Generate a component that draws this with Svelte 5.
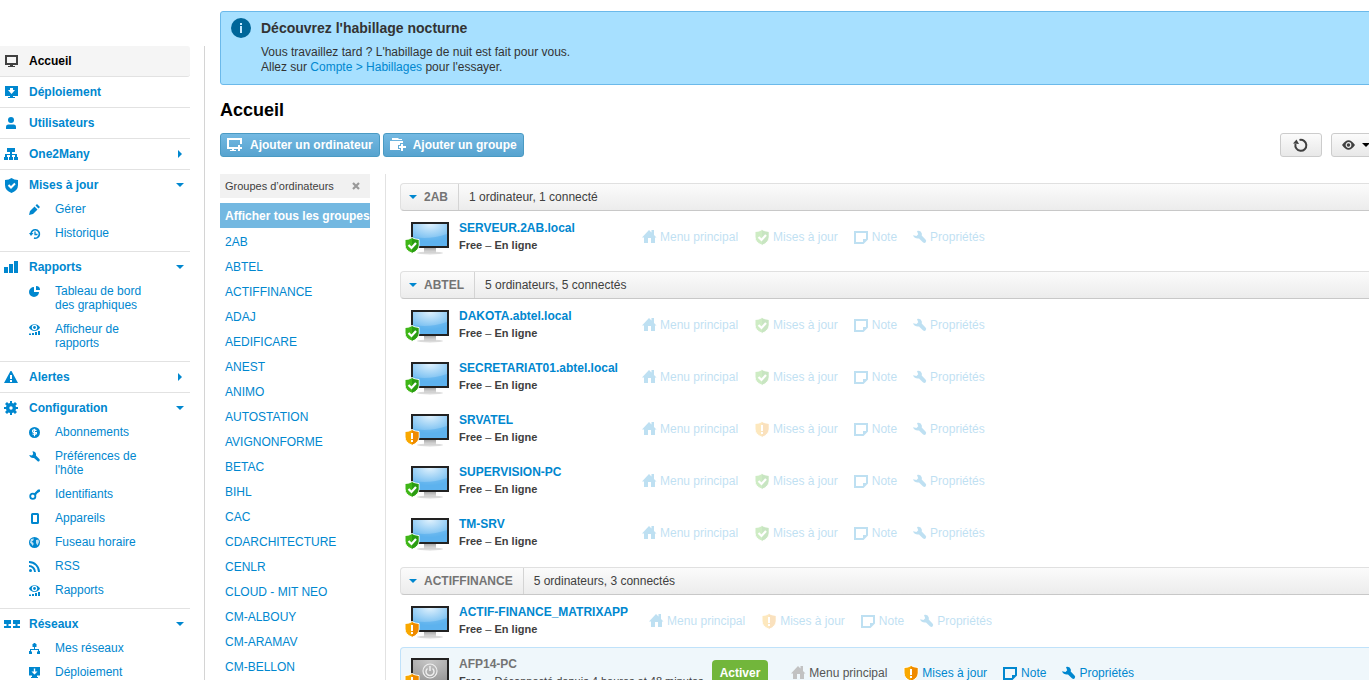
<script>
  const shapes = {
    monitor: '<path d="M1 1h13v10H9v1h2v1H4v-1h2v-1H1zM3 3v6h9V3z"/>',
    deploy: '<path d="M1 1h13v10H9v1h2v1H4v-1h2v-1H1zM6 3v2H4l3.500 4L11 5H9V3z"/>',
    user: '<circle cx="7" cy="4" r="3"/><path d="M2 13v-2.500Q2 9 4 8.500h6q2 .5 2 2V13z"/>',
    org: '<path d="M3 1h8v4H8v2h5v3h1v3h-4v-3h1V8H8v2h1v3H5v-3h1V8H3v2h1v3H0v-3h1V7h5V5H3z"/>',
    shieldBlue: '<path d="M7.500 0Q10 2 14 2v5q0 5.500-6.500 8Q1 12.500 1 7V2q4 0 6.500-2z"/><path d="M4.500 7l2.500 2.500L11 5.500" fill="none" stroke="#fff" stroke-width="2"/>',
    bars: '<path d="M0 7h4v6H0zM5 4h4v9H5zM10 1h4v12h-4z"/>',
    warning: '<path d="M6.500 1h1L14 13H0zM6 5v4h2V5zM6 10v2h2v-2z"/>',
    gear: '<path d="M6 0h2v2l1.500.5L11 1l2 2-1.500 1.500L12 6h2v2h-2l-.5 1.500L13 11l-2 2-1.500-1.500L8 12v2H6v-2l-1.500-.5L3 13l-2-2 1.500-1.500L2 8H0V6h2l.5-1.500L1 3l2-2 1.500 1.500L6 2zM7 5.300a1.700 1.700 0 100 3.400 1.700 1.700 0 000-3.400z"/>',
    networks: '<path d="M0 4h7v4H4.500v2H7v2H0v-2h2.500V8H0zM9 4h7v4h-2.500v2H16v2H9v-2h2.500V8H9z"/>',
    pencil: '<path d="M0 11l1-4 4.500-4.500 3 3L4 10zM6.500 1.500L8 0l3 3-1.500 1.500z"/>',
    history: '<path d="M2 6a4.200 4.200 0 113 4" fill="none" stroke="currentColor" stroke-width="1.600"/><path d="M0 5h4.500L2 8z"/><path d="M6 3.500v3h2.500" fill="none" stroke="currentColor" stroke-width="1.300"/>',
    pie: '<path d="M5 1v5h5a5 5 0 11-5-5z"/><path d="M7 0q4 0 4 4H7z"/>',
    viewer: '<path d="M0 3.500C2-1 9-1 11 3.500 9 8 2 8 0 3.500z"/><circle cx="5.500" cy="3.500" r="2.700" fill="#fff"/><circle cx="5.500" cy="3.500" r="1.400"/><path d="M0 9.500h2V11H0zM3 9h2v2H3zM6 8h2v3H6zM9 7h2v4H9z"/>',
    dollar: '<path d="M5.500 0a5.500 5.500 0 100 11 5.500 5.500 0 000-11z"/><path d="M7.500 3.500q-4-1.500-4 .5t4 1.500q.5 2.500-4 1.500M5.500 1.800v7.400" fill="none" stroke="#fff" stroke-width="1.100"/>',
    wrench: '<path d="M3.500.3Q6.500.3 7 3q.1 1-.1 1.500L10.300 8q1 1 .1 2t-2 0L5 6.900Q1.500 7.500.2 4L3 4.600 4.200 3z"/>',
    key: '<circle cx="3.800" cy="7.300" r="2.600" fill="none" stroke="currentColor" stroke-width="1.800"/><path d="M4.500 5L9 .5h2v2.200l-1.500.3v1l-1.300.3L6.500 7z"/>',
    device: '<path d="M3.500 0h5Q10 0 10 1.500v8Q10 11 8.500 11h-5Q2 11 2 9.500v-8Q2 0 3.500 0zM4 2v7h4V2z"/>',
    globe: '<path d="M5.500 0a5.500 5.500 0 100 11 5.500 5.500 0 000-11z"/><path d="M2 2l3-.5L4 4 2.500 4.500 4.500 6v1.500L3.500 9 2.500 7 1 5.500zM7 3l2.500-.5L10 5 8.500 8.500 7 6z" fill="#fff" opacity=".75"/>',
    rss: '<circle cx="1.500" cy="9.500" r="1.500"/><path d="M0 5a6 6 0 016 6M0 1a10 10 0 0110 10" fill="none" stroke="currentColor" stroke-width="1.900"/>',
    smallOrg: '<path d="M4.500 0h2v1h1v3h-4V1h1zM5 4h1v2h4v2h1v3H8V8.500h1V7H2v1.500h1V11H0V8h1V6h4z"/>',
    smallDeploy: '<path d="M0 0h11v8.500H8V10h1v1H2v-1h1V8.500H0zM4.800 1.500v3H2.500l3 3 3-3H6.200v-3z"/>',
    home: '<path d="M7 0l2.500 2.500V0H12v5l2.500 2.500H13V13H9V8H6v5H2V7.500H0z"/>',
    note: '<path d="M0 1h14v8.500L9.500 14H0zM2 3v9h7V9h3V3z"/><path d="M9.500 12.500V9.500H13" fill="none" stroke="currentColor"/>',
    wrenchBig: '<path d="M4 1Q8 0 8.800 3.500q.2 1-.1 2L12.500 9.500q1.300 1.300.2 2.700t-2.800 0L6 8.500Q1.500 9 0 5.300L3.500 6 5.200 4.200z"/>',
    refresh: '<path d="M6.500 2a5.500 5.500 0 11-4 4" fill="none" stroke="currentColor" stroke-width="2"/><path d="M0 5.500L3.500 1.500 6 6z"/>',
    eye: '<path d="M0 7q6.500-9.500 13 0-6.500 9.500-13 0z"/><circle cx="6.500" cy="7" r="2.300" fill="none" stroke="#eee" stroke-width="1.200"/>',
    addPc: '<path d="M0 1h15v6h-2V3H2v7h7v2H7v1h2v1H3v-1h2v-1H0zM11 8h2v2h2v2h-2v2h-2v-2H9v-2h2z"/>',
    addGroup: '<path d="M2 1h6l1 1h3v1H2zM0 4h13v2h-3v2H8v4h2v1H0zM11 7h2v2h3v2h-3v3h-2v-3H9V9h2z"/>',
    info: '<circle cx="10" cy="10" r="10" fill="#069"/><path d="M9 5h2v2H9zM9 8h2v7H9z" fill="#c5e9ff"/>'
  };

  const nav = [
    { label: 'Accueil', icon: 'monitor', active: true },
    { label: 'Déploiement', icon: 'deploy' },
    { label: 'Utilisateurs', icon: 'user' },
    { label: 'One2Many', icon: 'org', closed: true },
    { label: 'Mises à jour', icon: 'shieldBlue', items: [['pencil', 'Gérer'], ['history', 'Historique']] },
    { label: 'Rapports', icon: 'bars', items: [['pie', 'Tableau de bord des graphiques'], ['viewer', 'Afficheur de rapports']] },
    { label: 'Alertes', icon: 'warning', closed: true },
    {
      label: 'Configuration', icon: 'gear', items: [
        ['dollar', 'Abonnements'], ['wrench', "Préférences de l'hôte"], ['key', 'Identifiants'], ['device', 'Appareils'],
        ['globe', 'Fuseau horaire'], ['rss', 'RSS'], ['viewer', 'Rapports']
      ]
    },
    { label: 'Réseaux', icon: 'networks', items: [['smallOrg', 'Mes réseaux'], ['smallDeploy', 'Déploiement']] }
  ];

  const groups = ['2AB', 'ABTEL', 'ACTIFFINANCE', 'ADAJ', 'AEDIFICARE', 'ANEST', 'ANIMO', 'AUTOSTATION', 'AVIGNONFORME',
    'BETAC', 'BIHL', 'CAC', 'CDARCHITECTURE', 'CENLR', 'CLOUD - MIT NEO', 'CM-ALBOUY', 'CM-ARAMAV', 'CM-BELLON'];

  const sections = [
    { name: '2AB', count: '1 ordinateur, 1 connecté', hosts: [{ name: 'SERVEUR.2AB.local' }] },
    {
      name: 'ABTEL', count: '5 ordinateurs, 5 connectés', hosts: [
        { name: 'DAKOTA.abtel.local' }, { name: 'SECRETARIAT01.abtel.local' }, { name: 'SRVATEL', alert: true },
        { name: 'SUPERVISION-PC' }, { name: 'TM-SRV' }
      ]
    },
    {
      name: 'ACTIFFINANCE', count: '5 ordinateurs, 3 connectés', hosts: [
        { name: 'ACTIF-FINANCE_MATRIXAPP', alert: true },
        { name: 'AFP14-PC', alert: true, offline: true, since: 'Déconnecté depuis 4 heures et 48 minutes' }
      ]
    }
  ];
</script>

{#snippet icon(name, w, h = w)}
  <svg class="icon" width={w} height={h} viewBox="0 0 {w} {h}" fill="currentColor" fill-rule="evenodd" aria-hidden="true">{@html shapes[name]}</svg>
{/snippet}

{#snippet shield(alert)}
  <svg class="icon" width="16" height="17" viewBox="0 0 16 17" aria-hidden="true">
    <path d="M8 .5Q10.500 2.500 15 2.500V8q0 5.500-7 8.200Q1 13.500 1 8V2.500Q5.500 2.500 8 .5z" fill={alert ? '#f9a800' : '#3fb618'} stroke="#fff" />
    <path d="M8 1.200Q10.500 3 14.500 3v5q0 5-6.500 7.700z" fill={alert ? '#ef8a00' : '#2a9c12'} />
    {#if alert}
      <path d="M7 4h2v6H7zM7 11h2v2H7z" fill="#fff" />
    {:else}
      <path d="M4.500 8l3 3L12 6" fill="none" stroke="#fff" stroke-width="2.200" />
    {/if}
  </svg>
{/snippet}

{#snippet caret(dir)}
  <svg class="icon" width="8" height="8" viewBox="0 0 8 8" fill="currentColor" aria-hidden="true">
    <path d={dir === 'right' ? 'M2 0l4 4-4 4z' : 'M0 2h8L4 6z'} />
  </svg>
{/snippet}

<svg class="defs" width="0" height="0" aria-hidden="true">
  <defs>
    <radialGradient id="screen-on" cx=".5" cy="0" r=".8"><stop offset="0" stop-color="#dff1fd" /><stop offset="1" stop-color="#6dbaf0" /></radialGradient>
    <radialGradient id="screen-off" cx=".5" cy="0" r="1"><stop offset="0" stop-color="#c8c8c8" /><stop offset="1" stop-color="#999" /></radialGradient>
    <linearGradient id="stand" x2="0" y2="1"><stop offset="0" stop-color="#aaa" /><stop offset="1" stop-color="#e6e6e6" /></linearGradient>
  </defs>
</svg>

<div class="page">
  <nav class="sidebar">
    <ul class="menu">
      {#each nav as entry}
        <li class:active={entry.active}>
          <a class="head" class:open={entry.items} href="#{entry.icon}">
            <span class="slot">{@render icon(entry.icon, entry.icon === 'networks' ? 16 : 15)}</span>
            <span class="label">{entry.label}</span>
            {#if entry.items}{@render caret('down')}{:else if entry.closed}{@render caret('right')}{/if}
          </a>
          {#if entry.items}
            <ul class="sub">
              {#each entry.items as [ic, label]}
                <li><a href="#{ic}">{@render icon(ic, 12)}<span>{label}</span></a></li>
              {/each}
            </ul>
          {/if}
        </li>
      {/each}
    </ul>
  </nav>

  <main>
    <section class="notice">
      {@render icon('info', 20)}
      <div>
        <h2>Découvrez l'habillage nocturne</h2>
        <p>Vous travaillez tard ? L'habillage de nuit est fait pour vous.<br />Allez sur <a href="#themes">Compte &gt; Habillages</a> pour l'essayer.</p>
      </div>
    </section>

    <h1>Accueil</h1>

    <div class="toolbar">
      <button class="primary">{@render icon('addPc', 16)}Ajouter un ordinateur</button>
      <button class="primary">{@render icon('addGroup', 16)}Ajouter un groupe</button>
      <span class="spacer"></span>
      <button class="plain" aria-label="Actualiser">{@render icon('refresh', 15)}</button>
      <button class="plain view" aria-label="Affichage">{@render icon('eye', 14)}{@render caret('down')}</button>
    </div>

    <div class="content">
      <aside>
        <div class="groups-head">Groupes d’ordinateurs
          <button class="close" aria-label="Fermer"><svg width="8" height="8" viewBox="0 0 8 8"><path d="M1 1l6 6M7 1L1 7" stroke="#999" stroke-width="2.200" /></svg></button>
        </div>
        <ul class="groups">
          <li><a class="current" href="#all">Afficher tous les groupes</a></li>
          {#each groups as g}
            <li><a href="#{g}">{g}</a></li>
          {/each}
        </ul>
      </aside>

      <div class="hosts">
        {#each sections as s}
          <section class="section">
            <header>
              <button class="toggle">{@render caret('down')}{s.name}</button>
              <span class="count">{s.count}</span>
            </header>
            {#each s.hosts as h}
              <div class="host" class:offline={h.offline}>
                <div class="computer">
                  <svg width="46" height="34" viewBox="0 0 46 34" aria-hidden="true">
                    <path d="M19 26h12v5H19z" fill="url(#stand)" />
                    <ellipse cx="25" cy="31" rx="13" ry="1.500" fill="#ccc" opacity=".7" />
                    <path d="M6 0h38v26H6z" fill="#222" />
                    <path d="M8 2h34v22H8z" fill={h.offline ? 'url(#screen-off)' : 'url(#screen-on)'} />
                    {#if h.offline}
                      <circle cx="25" cy="13" r="7" fill="none" stroke="#eee" stroke-width="1.200" />
                      <path d="M22.500 10.500a4 4 0 105 0M25 8v5" fill="none" stroke="#eee" stroke-width="1.500" />
                    {:else}
                      <path d="M8 15q17 3 34-3v12H8z" fill="#4aa9ec" opacity=".45" />
                    {/if}
                  </svg>
                  <span class="status-badge">{@render shield(h.alert)}</span>
                </div>
                <div class="who">
                  <a class="name" href="#{h.name}">{h.name}</a>
                  <div class="state"><b>Free</b> – {#if h.since}{h.since}{:else}<b>En ligne</b>{/if}</div>
                </div>
                {#if h.offline}<button class="activate">Activer</button>{/if}
                <div class="actions">
                  <a class="main-menu" href="#menu">{@render icon('home', 15)}Menu principal</a>
                  <a href="#updates">{@render shield(h.alert)}Mises à jour</a>
                  <a href="#note">{@render icon('note', 15)}Note</a>
                  <a href="#properties">{@render icon('wrenchBig', 14)}Propriétés</a>
                </div>
              </div>
            {/each}
          </section>
        {/each}
      </div>
    </div>
  </main>
</div>

<style>
  :global(body) { background: #fff; }
  .page {
    display: flex;
    height: 100vh;
    overflow-x: hidden;
    overflow-y: auto;
    scrollbar-width: none;
    font: 12px/14px "Liberation Sans", Arial, sans-serif;
    color: #404040;
  }
  .page * { box-sizing: border-box; }
  .defs { position: absolute; }
  .icon { flex: none; display: block; }
  ul { list-style: none; margin: 0; padding: 0; }
  a { color: #0087cf; text-decoration: none; }
  button { font: inherit; margin: 0; cursor: pointer; }

  .sidebar {
    flex: none;
    width: 205px;
    height: max-content;
    margin-top: 46px;
    padding-right: 14px;
    border-right: 1px solid #d4d4d4;
  }
  .menu > li { border-bottom: 1px solid #e2e2e2; }
  .menu > .active { background: #f5f5f5; border-radius: 0 3px 3px 0; }
  .head { display: flex; align-items: center; padding: 8px 6px 8px 4px; font-weight: bold; }
  .head.open { padding-bottom: 5px; }
  .active .head { color: #000; }
  .active .slot { color: #404040; }
  .slot { display: flex; align-items: center; width: 25px; height: 14px; }
  .label { flex: 1; }
  .sub { padding-bottom: 6px; }
  .sub a { display: flex; gap: 14px; padding: 5px 30px 5px 29px; }
  .sub .icon, .sub :global(svg) { margin-top: 2px; }

  main { flex: 1; min-width: 0; margin-right: -16px; padding: 11px 0 0 15px; }
  .notice {
    display: flex;
    gap: 10px;
    padding: 6px 10px 9px;
    border: 1px solid #6bb9ea;
    border-radius: 3px;
    background: #a7e0ff;
    color: #333;
  }
  h2 { margin: 0; font-size: 14px; line-height: 20px; }
  .notice p { margin: 7px 0 0; line-height: 15px; }
  h1 { margin: 15px 0 12px; font-size: 18px; line-height: 21px; color: #000; }

  .toolbar { display: flex; gap: 3px; margin-bottom: 17px; }
  .spacer { flex: 1; }
  .primary {
    display: flex;
    align-items: center;
    gap: 7px;
    height: 24px;
    padding: 0 6px;
    border: 1px solid #4a9ac3;
    border-radius: 3px;
    background: linear-gradient(#74b9e2, #57a3cf);
    color: #fff;
    font-weight: bold;
  }
  .plain {
    display: flex;
    align-items: center;
    justify-content: center;
    gap: 6px;
    width: 42px;
    height: 24px;
    padding: 0 2px 0 0;
    border: 1px solid #ccc;
    border-radius: 3px;
    background: linear-gradient(#fbfbfb, #e8e8e8);
    color: #404040;
  }
  .view { justify-content: flex-start; width: 54px; margin-left: 6px; padding-left: 10px; }
  .view :global(svg:last-child) { color: #000; }

  .content { display: flex; }
  aside { flex: none; width: 166px; padding-right: 15px; border-right: 1px solid #e2e2e2; }
  .groups-head {
    display: flex;
    align-items: center;
    justify-content: space-between;
    height: 24px;
    margin-bottom: 5px;
    padding: 0 10px 0 5px;
    background: #f1f1f1;
    font-size: 11px;
  }
  .close { display: flex; padding: 0; border: 0; background: none; }
  .groups a { display: block; padding: 6px 0 5px 5px; white-space: nowrap; }
  .groups .current { margin-bottom: 1px; background: #73b8e1; color: #fff; font-weight: bold; }

  .hosts { flex: 1; min-width: 0; padding: 9px 0 0 14px; }
  .section { margin-bottom: 8px; }
  header {
    display: flex;
    height: 28px;
    border: 1px solid #e0e0e0;
    border-bottom-color: #c8c8c8;
    border-radius: 4px;
    background: linear-gradient(#fbfbfb, #ececec);
    line-height: 26px;
  }
  .toggle {
    display: flex;
    align-items: center;
    gap: 7px;
    padding: 0 10px 0 8px;
    border: 0;
    border-right: 1px solid #d4d4d4;
    background: none;
    color: #747474;
    font-weight: bold;
  }
  .toggle :global(svg) { color: #0087cf; }
  .count { padding-left: 10px; }

  .host { display: flex; height: 52px; padding: 0 4px; border: 1px solid transparent; border-width: 1px 1px 0; white-space: nowrap; }
  .host.offline { border-color: #c0e2fa; border-radius: 4px 4px 0 0; background: #eff7fb; }
  .computer { position: relative; flex: none; width: 54px; padding-top: 10px; }
  .status-badge { position: absolute; left: -1px; top: 25px; }
  .who { min-width: 162px; padding-top: 9px; }
  .name { display: block; font-weight: bold; }
  .state { margin-top: 3px; font-size: 11px; }
  .offline .name { color: #747474; }
  .activate {
    align-self: flex-start;
    height: 26px;
    margin: 12px 2px 0 8px;
    padding: 0 8px;
    border: 0;
    border-radius: 4px;
    background: #72b63b;
    color: #fff;
    font-weight: bold;
  }
  .actions { display: flex; gap: 16px; padding-left: 21px; padding-top: 17px; opacity: .25; }
  .offline .actions { opacity: 1; }
  .actions a { display: flex; align-items: center; gap: 3px; height: 16px; }
  .offline .main-menu { color: #555; }
  .offline .main-menu :global(svg) { color: #c2c2c2; }
</style>
